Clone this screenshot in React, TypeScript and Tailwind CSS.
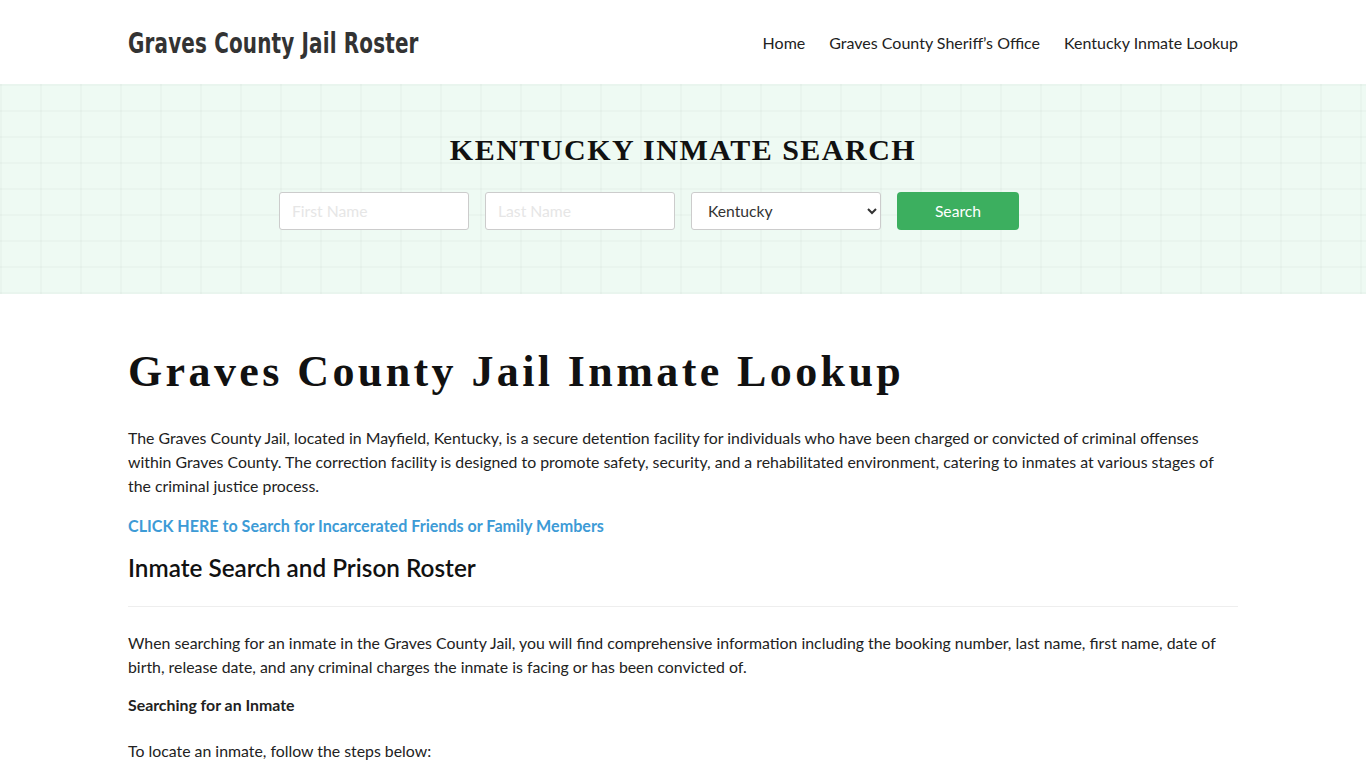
import { ChangeEvent, useState } from "react"

const navLinks = ["Home", "Graves County Sheriff’s Office", "Kentucky Inmate Lookup"]

export default function App() {
  const [state, setState] = useState("Kentucky")

  return (
    <div className="min-h-screen bg-white text-[#222] font-['Lato',sans-serif] text-[15.85px] leading-6">
      <header className="h-[84px] bg-white">
        <div className="mx-auto flex h-full max-w-[1110px] items-center justify-between pt-[2px]">
          {/* no condensed display face installed: squeeze DejaVu Condensed to the logo's width */}
          <a className="inline-block origin-left scale-x-[0.765] whitespace-nowrap font-['DejaVu_Sans_Condensed',sans-serif] text-[29px] font-bold tracking-[0.2px] text-[#333]">
            Graves County Jail Roster
          </a>
          <nav className="flex items-center gap-6">
            {navLinks.map((label) => (
              <a key={label} className="text-[16px] text-[#222]">
                {label}
              </a>
            ))}
          </nav>
        </div>
      </header>

      <section className="h-[210px] bg-[#eefaf3] bg-[linear-gradient(to_right,rgba(0,0,0,0.018)_2px,transparent_2px),linear-gradient(to_bottom,rgba(0,0,0,0.018)_2px,transparent_2px)] bg-[size:40px_26px] pt-[48px]">
        <h2 className="text-center font-['Liberation_Serif',serif] text-[30px] font-bold leading-9 tracking-[1.5px] text-[#111]">
          KENTUCKY INMATE SEARCH
        </h2>
        <form className="mt-[24px] flex justify-center gap-4 pr-[68px]" onSubmit={(e) => e.preventDefault()}>
          <input
            placeholder="First Name"
            className="h-[38px] w-[190px] rounded-[3px] border border-[#ccc] bg-white px-3 text-[15.7px] placeholder:text-[#e6e6e6] outline-none"
          />
          <input
            placeholder="Last Name"
            className="h-[38px] w-[190px] rounded-[3px] border border-[#ccc] bg-white px-3 text-[15.7px] placeholder:text-[#e6e6e6] outline-none"
          />
          <select
            value={state}
            onChange={(e: ChangeEvent<HTMLSelectElement>) => setState(e.target.value)}
            className="h-[38px] w-[190px] rounded-[3px] border border-[#ccc] bg-white px-3 text-[15.7px] text-[#333]"
          >
            <option>Kentucky</option>
          </select>
          <button className="h-[38px] w-[122px] rounded-[4px] bg-[#3caf5f] text-[15.7px] text-white">Search</button>
        </form>
      </section>

      <main className="mx-auto max-w-[1110px] pt-[50px]">
        <h1 className="font-['Liberation_Serif',serif] text-[44px] font-bold leading-[56px] tracking-[3.4px] text-[#111]">
          Graves County Jail Inmate Lookup
        </h1>
        <p className="mt-[26px]">
          The Graves County Jail, located in Mayfield, Kentucky, is a secure detention facility for individuals who have been charged or convicted of criminal offenses within Graves County. The correction facility is designed to promote safety, security, and a rehabilitated environment, catering to inmates at various stages of the criminal justice process.
        </p>
        <p className="mt-4">
          <a className="text-[16.1px] font-bold text-[#3d9bd6]">CLICK HERE to Search for Incarcerated Friends or Family Members</a>
        </p>
        <h2 className="mt-[14px] text-[24.3px] font-semibold leading-[32px] text-[#111]">Inmate Search and Prison Roster</h2>
        <hr className="mt-[22px] border-[#eee]" />
        <p className="mt-[24px]">
          When searching for an inmate in the Graves County Jail, you will find comprehensive information including the booking number, last name, first name, date of birth, release date, and any criminal charges the inmate is facing or has been convicted of.
        </p>
        <p className="mt-[14px] font-bold">Searching for an Inmate</p>
        <p className="mt-[22px]">To locate an inmate, follow the steps below:</p>
      </main>
    </div>
  )
}
